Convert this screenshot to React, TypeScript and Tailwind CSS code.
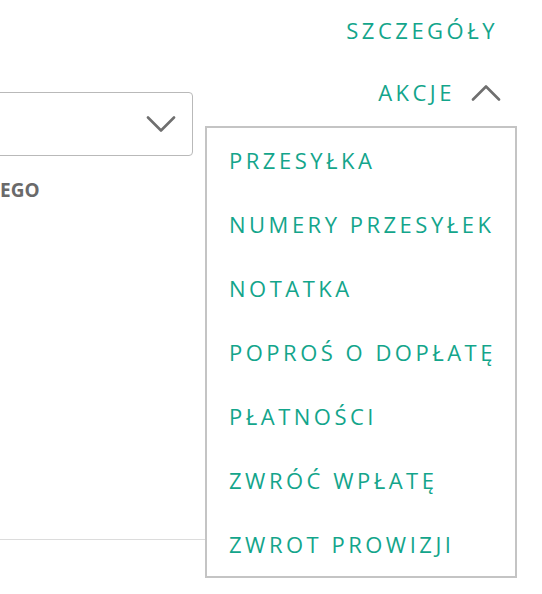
const GREEN = "text-[#13a58b]";

const ACTIONS = [
  "PRZESYŁKA",
  "NUMERY PRZESYŁEK",
  "NOTATKA",
  "POPROŚ O DOPŁATĘ",
  "PŁATNOŚCI",
  "ZWRÓĆ WPŁATĘ",
  "ZWROT PROWIZJI",
];

function Chevron({ up }: { up?: boolean }) {
  return (
    <svg width="30" height="17" viewBox="0 0 30 17" fill="none">
      <path
        d={up ? "M2 15.5 L15 2.5 L28 15.5" : "M2 1.5 L15 14.5 L28 1.5"}
        stroke="#6f6f6f"
        strokeWidth="2.6"
        strokeLinecap="round"
        strokeLinejoin="round"
      />
    </svg>
  );
}

export default function App() {
  return (
    <div
      className="relative flex h-[594px] w-[542px] overflow-hidden bg-white"
      style={{ fontFamily: '"Open Sans", "Liberation Sans", sans-serif' }}
    >
      {/* left column: form fragment */}
      <div className="flex w-[205px] shrink-0 flex-col">
        <div className="ml-[-12px] mt-[92px] flex h-[64px] w-[205px] items-center justify-end rounded-[4px] border border-[#b9b9b9] pr-[16px]">
          <Chevron />
        </div>
        <div className="mt-[22px] text-[19px] font-bold leading-[24px] text-[#6a6a6a]">
          EGO
        </div>
        <div className="mt-[337px] h-px w-full bg-[#dcdcdc]" />
      </div>

      {/* right column: links */}
      <div className="flex flex-1 flex-col items-end pr-[44px] pt-[16px]">
        <a className={`text-[22px] leading-[28px] tracking-[3.5px] ${GREEN}`}>
          SZCZEGÓŁY
        </a>
        <div className="mr-[-3px] mt-[34px] flex items-center gap-[16px]">
          <span className={`text-[22px] leading-[28px] tracking-[3.5px] ${GREEN}`}>
            AKCJE
          </span>
          <Chevron up />
        </div>
      </div>

      {/* dropdown */}
      <div className="absolute left-[205px] top-[126px] w-[312px] border-2 border-[#c4c4c4] bg-white">
        {ACTIONS.map((a) => (
          <div
            key={a}
            className={`flex h-[64px] items-center pl-[22px] text-[22px] tracking-[3.5px] ${GREEN}`}
          >
            {a}
          </div>
        ))}
      </div>
    </div>
  );
}
